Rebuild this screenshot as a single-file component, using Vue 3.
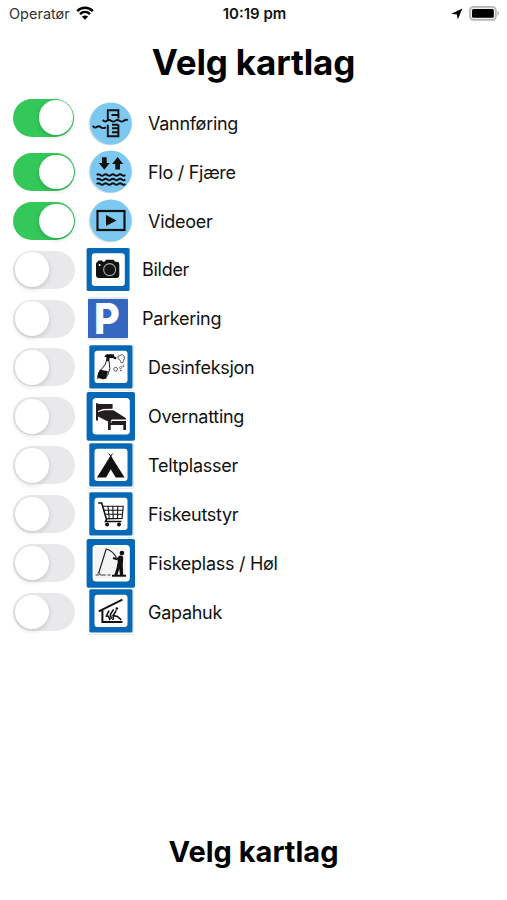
<script setup>
import { ref } from 'vue'

const title = 'Velg kartlag'

const layers = ref([
  { id: 'flow', label: 'Vannføring', on: true, frame: 'round' },
  { id: 'tide', label: 'Flo / Fjære', on: true, frame: 'round' },
  { id: 'video', label: 'Videoer', on: true, frame: 'round' },
  { id: 'photo', label: 'Bilder', on: false, frame: 'left' },
  { id: 'parking', label: 'Parkering', on: false, frame: 'parking' },
  { id: 'disinfect', label: 'Desinfeksjon', on: false, frame: 'sign' },
  { id: 'bed', label: 'Overnatting', on: false, frame: 'large' },
  { id: 'tent', label: 'Teltplasser', on: false, frame: 'sign' },
  { id: 'shop', label: 'Fiskeutstyr', on: false, frame: 'sign' },
  { id: 'fishing', label: 'Fiskeplass / Høl', on: false, frame: 'large' },
  { id: 'shelter', label: 'Gapahuk', on: false, frame: 'sign' }
])
</script>

<template>
  <div class="screen">
    <header class="status">
      <div class="status-side">
        <span class="carrier">Operatør</span>
        <svg class="wifi" viewBox="0 0 18 14">
          <path d="M1.2 5.2C5.6 .7 12.4 .7 16.8 5.2M4 8.100c2.900-2.800 7.100-2.800 10 0" fill="none" stroke="#000" stroke-width="2.5" />
          <path d="M9 13.800 5.900 10.600c1.800-1.600 4.400-1.600 6.200 0z" />
        </svg>
      </div>
      <span class="time">10:19 pm</span>
      <div class="status-side end">
        <svg class="arrow" viewBox="0 0 12 12"><path d="M11.400.6 6.800 11.500 5.900 6.500.4 5.700z" /></svg>
        <svg class="battery" viewBox="0 0 31 15">
          <rect x=".9" y=".9" width="26" height="13" rx="3.600" fill="#eee" stroke="#b5b5b5" stroke-width="1.700" />
          <rect x="3" y="3" width="21.800" height="8.800" rx="1.500" />
          <path d="M28.400 5c2.200.6 2.200 4.200 0 4.800z" fill="#b5b5b5" />
        </svg>
      </div>
    </header>

    <h1 class="title">{{ title }}</h1>

    <ul class="layers">
      <li v-for="layer in layers" :key="layer.id" class="row">
        <button class="toggle" :class="{ on: layer.on }" @click="layer.on = !layer.on"><span class="knob"></span></button>
        <svg class="icon" viewBox="0 0 50 49">
          <template v-if="layer.frame === 'round'">
            <circle cx="23.800" cy="25.200" r="21.200" fill="#dedede" />
            <circle cx="24.900" cy="24.500" r="21" fill="#7cc8f0" />
          </template>
          <template v-else-if="layer.frame === 'left'">
            <rect x=".6" y="3" width="43" height="43" rx="1.500" fill="#0769b5" />
            <rect x="5.800" y="8.300" width="33" height="32.700" rx="3" fill="#fff" />
          </template>
          <template v-else-if="layer.frame === 'parking'">
            <rect x="1.600" y="3" width="40.400" height="43" fill="#e5eaf6" />
            <rect x="2" y="5" width="40" height="39" rx=".8" fill="#3468c0" />
            <text class="letter" transform="translate(7.900 39.600) scale(.92 1)">P</text>
          </template>
          <template v-else-if="layer.frame === 'large'">
            <rect x=".6" y=".1" width="48.400" height="48.600" rx="1.800" fill="#0769b5" />
            <rect x="6.600" y="6" width="37.200" height="36.600" rx="3.500" fill="#fff" />
          </template>
          <template v-else>
            <rect x="2.600" y="2" width="45.400" height="46" fill="#e6ebf5" />
            <rect x="3" y="2" width="44" height="44.800" fill="#fff" />
            <rect x="3.300" y="2.300" width="43.200" height="43.200" rx="1.500" fill="#0769b5" />
            <rect x="8.500" y="7.700" width="33" height="32.300" rx="3" fill="#fff" />
          </template>

          <g v-if="layer.id === 'flow'" class="line">
            <path d="M21.800 20.500V11.200h10.600v8.200M25.500 16h6.500M16.700 20.800q2 2.600 4.200 1t4.300 0 4.200 0 4.200 0 4.200 0 4-.8M6.700 26.800q1.800 2.800 4 1.200t4 .2 5.300.2M21.800 25.800v11.400h10.600V25.400M26 29.300h6M26 33.200h6M26 25.800h6" />
          </g>

          <g v-else-if="layer.id === 'tide'">
            <path d="M16.100 10.200h4.600v5.700h3L18.400 22.800 12.900 15.900h3.200zM31.600 10 37.200 16.900h-3.200v5.700h-4.700v-5.700h-3.200z" />
            <path class="line" d="M10.700 28q1.800-1.600 3.600 0t3.600 0 3.600 0 3.600 0 3.600 0 3.600 0 3.600 0 3.400 0M10.700 32.500q1.800-1.600 3.600 0t3.600 0 3.600 0 3.600 0 3.600 0 3.600 0 3.600 0 3.400 0M10.700 37q1.800-1.600 3.600 0t3.600 0 3.600 0 3.600 0 3.600 0 3.600 0 3.600 0 3.400 0" />
          </g>

          <g v-else-if="layer.id === 'video'">
            <rect x="11.500" y="15" width="27" height="19" fill="none" stroke="#111" stroke-width="2.200" />
            <path d="M20 19 30.500 24.500 20 30z" />
          </g>

          <g v-else-if="layer.id === 'photo'">
            <path d="M12.200 15.500h4l.6 1.300h1.700l1.600-2.100h7.400l1.700 2.100h1.900q2.200.1 2.200 2.200v11.600q0 2.200-2.300 2.300H12.400Q10 32.800 10 30.600V18.900q0-1.800 1.700-2.200z" />
            <circle cx="23.600" cy="24.600" r="6" fill="#151515" stroke="#aaa" stroke-width="1.100" />
            <circle cx="13.600" cy="20.100" r="1" fill="#fff" />
          </g>

          <g v-else-if="layer.id === 'disinfect'">
            <path d="M18.300 13.400 20.500 11.200h7.200l.6 2.100 2.300 1.500-.8 1.600-2.600-1.200-3.600-.2-.5 3.200h-3.100l.5-3.800z" />
            <path d="M20.600 17.500 19 21.800 12.700 29.700 11.700 36M23 17.500l.8 8-1.600 5.500-2.800 5" fill="none" stroke="#222" stroke-width="1" />
            <path d="M13.800 26.500 22 28.200 19.900 35.200q-1.700 1.300-4 .9l-3.600-1q-1.200-.9-.7-2.300z" />
            <path d="M32 15.500q-1-3 1.900-3 2.900-2 4 .4 1.500 2.400-.2 4.400-.3 2.400-2.300 2.700-.8-3.200-3.400-4.500zM37.200 21.700v2.600" fill="none" stroke="#444" stroke-width=".9" />
            <circle cx="29.600" cy="26.200" r="1.900" fill="none" stroke="#444" stroke-width=".9" />
            <circle cx="34.600" cy="24.600" r="1.100" fill="none" stroke="#555" stroke-width=".8" />
            <path d="m34.800 26.800.2 1.400" stroke="#222" stroke-width="1.200" />
          </g>

          <g v-else-if="layer.id === 'bed'" fill="#231f20">
            <path d="M10 11.200h1.700l.6.700h14.300v4.800L17 17l-5 2v9.600h-2z" />
            <path d="M11.500 20.200 18 18.300l9.500-.1L40 26.300v1.200H26.700q-2.500.4-1.800 3.500L11.500 24.200z" />
            <path d="M25.500 28.900H40V38h-2.700v-5H24.700v5H22v-8.700l3.500 1.600z" />
          </g>

          <g v-else-if="layer.id === 'tent'">
            <path d="m24.700 14.400 13.900 22h-8.900l-5-8.200-4.600 8.200h-9.200z" />
            <path d="m22.800 12.600 2.900 4M26.600 12.600l-2.900 4" stroke="#111" stroke-width="1" />
          </g>

          <g v-else-if="layer.id === 'shop'">
            <path d="M17 16.300h20.200l-1.100 12.100-16 .5M18 20.200h18.500M19.300 24.200h17M22 16.300l1.200 12.200M26.800 16.300l.4 12.200M31.800 16.300l-.3 12.200" fill="none" stroke="#111" stroke-width="1.100" />
            <path d="M12.200 13h3.500l4.800 16.400-1 2.100h15.900" fill="none" stroke="#111" stroke-width="1.600" />
            <circle cx="21.100" cy="34.500" r="2" /><circle cx="33" cy="34.500" r="2" />
          </g>

          <g v-else-if="layer.id === 'fishing'">
            <rect x="9" y="8.500" width="31" height="31" fill="#f4f4f5" />
            <path d="m12.800 33.800 7.400-23.800q5.800 1.300 10 8" fill="none" stroke="#222" stroke-width="1.200" />
            <path d="M9.600 36h3.200l1-.8 1 .8h5M21.500 36h3M11.500 34h2.700" fill="none" stroke="#222" stroke-width=".9" />
            <circle cx="35.900" cy="14" r="2.300" />
            <path d="M33.500 16.500q3.700-.5 3.700 2l-.4 8.200.4 9.200-3.200.2-.7-6-1.900 6-3-.2 2.300-7.500 1.200-7-5.200-1.500.4-1.700 4.500.3z" />
            <path d="M26 36.700h14" stroke="#111" stroke-width="2" />
          </g>

          <g v-else-if="layer.id === 'shelter'">
            <path d="m12.800 24.300 23.600-11.600M16.400 23v12h20" fill="none" stroke="#111" stroke-width="2" />
            <path d="m23 23.600-2.600 5.400 2.200.2 1.300 4M27.600 22.400l-3.200 5 .9 4.500M30.300 23.300l-3.200 5.200 4.300 1 3.800 3.400M27.500 28.500l-.6 4.500" fill="none" stroke="#111" stroke-width="1.600" />
            <circle cx="30.800" cy="21.600" r="1.300" />
          </g>
        </svg>
        <span class="label" :class="{ near: layer.frame === 'left' || layer.frame === 'parking' }">{{ layer.label }}</span>
      </li>
    </ul>

    <footer class="footer">{{ title }}</footer>
  </div>
</template>

<style>
body {
  background: #fff;
}
</style>

<style scoped>
.screen {
  display: flex;
  flex-direction: column;
  box-sizing: border-box;
  width: 507px;
  height: 900px;
  overflow: hidden;
  background: #fff;
  color: #111;
  font-family: Inter, "Liberation Sans", sans-serif;
}
.status {
  display: grid;
  grid-template-columns: 1fr auto 1fr;
  align-items: center;
  height: 27px;
  padding: 0 7px 0 9px;
  font-size: 14.500px;
}
.status-side {
  display: flex;
  align-items: center;
}
.carrier {
  color: #333;
}
.wifi {
  width: 18px;
  height: 14px;
  margin: 0 0 1px 6px;
}
.time {
  font-size: 15px;
  font-weight: 600;
}
.end {
  justify-content: flex-end;
}
.arrow {
  width: 12px;
  height: 12px;
  margin-right: 6px;
}
.battery {
  width: 31px;
  height: 15px;
  margin-bottom: 1px;
}
.title {
  margin: 0;
  padding-top: 12px;
  height: 59.600px;
  line-height: 46px;
  font-size: 35px;
  font-weight: 700;
  letter-spacing: -0.150px;
  text-align: center;
  color: #000;
}
.layers {
  list-style: none;
  margin: 0;
  padding: 0 0 0 13px;
}
.row {
  display: flex;
  align-items: center;
  height: 48.900px;
}
.toggle {
  display: flex;
  align-items: center;
  flex: none;
  box-sizing: border-box;
  width: 62px;
  height: 38px;
  padding: 0 1.500px;
  border: 0;
  border-radius: 19px;
  background: #e9e9eb;
}
.toggle.on {
  justify-content: flex-end;
  background: #34c759;
}
.row:first-child .toggle {
  width: 61px;
  margin: 0 1px 11px 0;
  padding-right: 1px;
}
.knob {
  width: 34.500px;
  height: 34.500px;
  border-radius: 50%;
  background: #fff;
  box-shadow: 0 2px 5px rgba(0, 0, 0, 0.15);
}
.icon {
  flex: none;
  width: 50px;
  height: 49px;
  margin-left: 11px;
  overflow: visible;
  fill: #111;
}
.line {
  fill: none;
  stroke: #111;
  stroke-width: 1.900;
}
.letter {
  fill: #fff;
  font-family: Inter, sans-serif;
  font-size: 43px;
  font-weight: 800;
}
.label {
  margin-left: 12px;
  padding-top: 1.500px;
  font-size: 18px;
  letter-spacing: -0.280px;
  line-height: 24px;
  white-space: nowrap;
}
.label.near {
  margin-left: 6px;
}
.footer {
  margin-top: auto;
  padding-bottom: 28px;
  line-height: 40px;
  font-size: 29px;
  font-weight: 700;
  text-align: center;
  color: #000;
}
</style>
